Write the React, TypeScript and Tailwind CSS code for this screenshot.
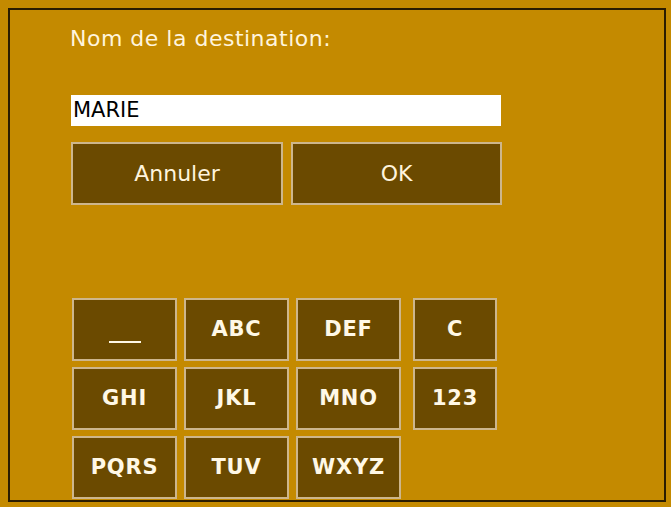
const keys = [
  ['__', 'ABC', 'DEF', 'C'],
  ['GHI', 'JKL', 'MNO', '123'],
  ['PQRS', 'TUV', 'WXYZ'],
];

function Key({ label, wide }: { label: string; wide: boolean }) {
  return (
    <div
      className={`${wide ? 'w-[105px]' : 'w-[84px]'} h-[63px] flex items-center justify-center bg-[#6b4a00] border-2 border-[#cdb68c] text-[#fff8e6] text-[21px] font-bold tracking-[0.8px]`}
    >
      {label === '__' ? <span className="block w-[32px] h-[2px] bg-[#fff8e6] mt-[24px]" /> : label}
    </div>
  );
}

export default function App() {
  return (
    <div
      className="w-[671px] h-[507px] bg-[#c48a00] pl-[8px] pt-[8px] pr-[5px] pb-[5px]"
      style={{ fontFamily: 'Tahoma, "DejaVu Sans", sans-serif' }}
    >
      <div className="h-full border-2 border-[#2a1c00] pl-[60px] flex flex-col">
        <div className="mt-[16px] text-[22px] leading-[26px] text-[#fff4dc] tracking-[0.5px]">
          Nom de la destination:
        </div>

        <div className="mt-[43px] ml-[1px] w-[430px] h-[31px] bg-white text-black text-[21px] leading-[31px] pl-[2px]">
          MARIE
        </div>

        <div className="mt-[16px] ml-[1px] flex gap-[8px]">
          <button className="w-[212px] h-[63px] bg-[#6b4a00] border-2 border-[#cdb68c] text-[#fff4dc] text-[22px]">
            Annuler
          </button>
          <button className="w-[211px] h-[63px] bg-[#6b4a00] border-2 border-[#cdb68c] text-[#fff4dc] text-[22px]">
            OK
          </button>
        </div>

        <div className="mt-[93px] ml-[2px] flex flex-col gap-[6px]">
          {keys.map((row, r) => (
            <div key={r} className="flex gap-[7px]">
              {row.map((k, i) => (
                <div key={k} className={i === 3 ? 'ml-[5px]' : ''}>
                  <Key label={k} wide={i < 3} />
                </div>
              ))}
            </div>
          ))}
        </div>
      </div>
    </div>
  );
}
